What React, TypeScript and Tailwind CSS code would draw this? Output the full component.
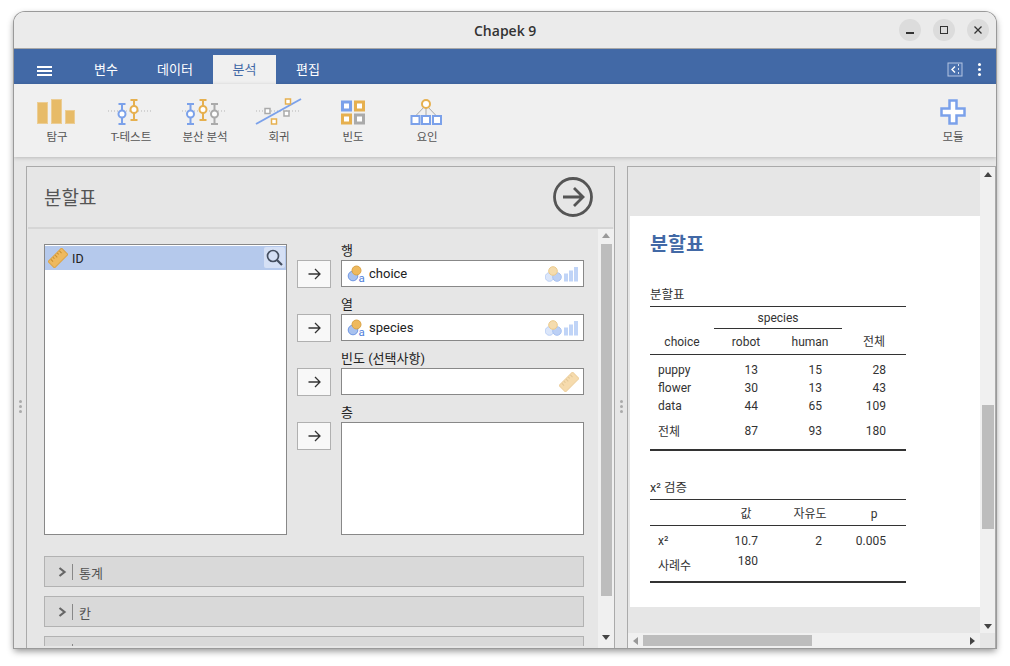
import type { ReactNode } from "react";

const FONT = "font-['Roboto','Noto_Sans_CJK_KR',sans-serif]";

const TABS = [
  { label: "변수", width: "w-[62px]" },
  { label: "데이터", width: "w-[76px]" },
  { label: "분석", width: "w-[63px]", active: true },
  { label: "편집", width: "w-[64px]" },
];

function Ruler({ faded = false }: { faded?: boolean }) {
  return (
    <svg width="20" height="20" viewBox="0 0 20 20" className={faded ? "opacity-50" : ""}>
      <g transform="rotate(-45 10 10)">
        <rect x="0.5" y="5.5" width="19" height="9" rx="0.5" fill="#eeb95e" stroke="#dfa544" />
        <path d="M4 6v3M7 6v2M10 6v3M13 6v2M16 6v3" stroke="#c98f30" strokeWidth="1" />
      </g>
    </svg>
  );
}

function Nominal() {
  return (
    <svg width="18" height="18" viewBox="0 0 18 18" className="shrink-0">
      <circle cx="6" cy="11" r="4.800" fill="#a9c2ef" stroke="#6f97e4" />
      <circle cx="9.500" cy="5.500" r="4.500" fill="#eeb95e" stroke="#d9a245" />
      <text x="11.500" y="16.5" fontSize="11.500" fill="#4f7fdb" fontFamily="Roboto">a</text>
    </svg>
  );
}

function AllowedTypes() {
  return (
    <svg width="34" height="18" viewBox="0 0 34 18">
      <circle cx="4.500" cy="12" r="4.300" fill="#dbe6fa" stroke="#bcd0f5" />
      <circle cx="12" cy="12" r="4.300" fill="#bcd0f5" stroke="#a8c2f2" />
      <circle cx="8" cy="6" r="4.300" fill="#f5dcae" stroke="#eccb8d" />
      <path d="M19 8.500h4v8h-4zM24 5.500h4v11h-4zM29 2h4v14.500h-4z" fill="#c0d4f7" />
    </svg>
  );
}

function ErrorBar({ x, top, bottom, cy, color }: { x: number; top: number; bottom: number; cy: number; color: string }) {
  return (
    <g stroke={color} strokeWidth="2" fill="none">
      <path d={`M${x - 3.500} ${top}h7M${x - 3.500} ${bottom}h7M${x} ${top}V${bottom}`} />
      <circle cx={x} cy={cy} r="3.500" fill="#fff" />
    </g>
  );
}

function ToolIcon({ kind }: { kind: string }) {
  const blue = "#7ba1ea";
  const orange = "#e6b04f";
  const grey = "#aaaaaa";
  const dotted = <path d="M1 13H46" stroke="#b5b5b5" strokeDasharray="1 2" />;
  return (
    <svg width="48" height="28" viewBox="0 0 48 28">
      {kind === "bars" && (
        <g fill="#e7bb68" stroke="#eccd94">
          <rect x="4.500" y="4.500" width="10" height="21" />
          <rect x="18.500" y="1.500" width="10" height="24" />
          <rect x="32.500" y="12.500" width="9" height="13" />
        </g>
      )}
      {kind === "ttest" && (
        <>
          {dotted}
          <ErrorBar x={15} top={6} bottom={26} cy={16} color={blue} />
          <ErrorBar x={27} top={2} bottom={22} cy={11.500} color={orange} />
        </>
      )}
      {kind === "anova" && (
        <>
          {dotted}
          <ErrorBar x={9.500} top={6} bottom={26} cy={16} color={blue} />
          <ErrorBar x={22} top={2} bottom={22} cy={11.500} color={orange} />
          <ErrorBar x={33.500} top={6} bottom={26} cy={16} color={grey} />
        </>
      )}
      {kind === "regression" && (
        <>
          {dotted}
          <path d="M1 26L46 1" stroke={blue} strokeWidth="2" />
          <g fill="#fff" strokeWidth="1.500">
            <rect x="10" y="10.500" width="5" height="5" stroke={grey} />
            <rect x="29" y="13" width="5" height="5" stroke={grey} />
            <rect x="30.500" y="1" width="5" height="5" stroke={orange} />
            <rect x="16.500" y="21" width="5" height="5" stroke={orange} />
          </g>
        </>
      )}
      {kind === "frequency" && (
        <g fill="#fff" strokeWidth="3">
          <rect x="13.500" y="4" width="8" height="8" stroke={blue} />
          <rect x="26.500" y="4" width="8" height="8" stroke={orange} />
          <rect x="13.500" y="17" width="8" height="8" stroke={orange} />
          <rect x="26.500" y="17" width="8" height="8" stroke={grey} />
        </g>
      )}
      {kind === "factor" && (
        <>
          <path d="M23 7L12.500 18M23 7V18M23 7L33.500 18" stroke="#a8a8a8" />
          <circle cx="23" cy="6" r="4" fill="#fff" stroke={orange} strokeWidth="2" />
          <g fill="#fff" stroke={blue} strokeWidth="2">
            <rect x="8.500" y="18" width="8" height="8" />
            <rect x="19" y="18" width="8" height="8" />
            <rect x="30" y="18" width="8" height="8" />
          </g>
        </>
      )}
      {kind === "plus" && (
        <path
          d="M20.500 2.500h7v8h8v7h-8v8h-7v-8h-8v-7h8z"
          fill="#fff"
          stroke={blue}
          strokeWidth="2.500"
        />
      )}
    </svg>
  );
}

function Tool({ kind, label, width = "w-[74px]" }: { kind: string; label: string; width?: string }) {
  return (
    <div className={`${width} flex flex-col items-center`}>
      <ToolIcon kind={kind} />
      <div className="mt-[2px] text-[11.500px] leading-[18px] text-[#555]">{label}</div>
    </div>
  );
}

function ArrowButton() {
  return (
    <button className="flex h-[28px] w-[34px] items-center justify-center border border-[#b0b0b0] bg-[#f8f8f8]">
      <svg width="13" height="12" viewBox="0 0 13 12" fill="none" stroke="#333" strokeWidth="1.300">
        <path d="M0.500 6H12M7 1l5 5-5 5" />
      </svg>
    </button>
  );
}

function TargetRow({ label, children }: { label: string; children: ReactNode }) {
  return (
    <div className="flex h-[54px] items-start gap-[10px]">
      <div className="mt-[17px]">
        <ArrowButton />
      </div>
      <div className="w-[243px]">
        <div className="h-[15px] text-[13px] leading-[15px] text-[#222]">{label}</div>
        {children}
      </div>
    </div>
  );
}

function VarBox({ name }: { name: string }) {
  return (
    <div className="mt-[2px] flex h-[27px] items-center border border-[#888] bg-white pl-[5px] pr-[4px]">
      <Nominal />
      <span className="ml-[4px] flex-1 text-[13px] text-[#222]">{name}</span>
      <AllowedTypes />
    </div>
  );
}

function Section({ label }: { label: string }) {
  return (
    <div className="mb-[9px] flex h-[31px] shrink-0 items-center border border-[#b2b2b2] bg-[#d9d9d9] pl-[13px]">
      <svg width="9" height="10" viewBox="0 0 9 10" fill="none" stroke="#666" strokeWidth="2.200">
        <path d="M1.500 1l5 4-5 4" />
      </svg>
      <div className="ml-[5px] h-[16px] w-px bg-[#888]" />
      <span className="ml-[6px] pt-[4px] text-[13px] text-[#555]">{label}</span>
    </div>
  );
}

function Triangle({ dir, color = "#444" }: { dir: "up" | "down" | "left" | "right"; color?: string }) {
  const points = {
    up: "0,6 4,1 8,6",
    down: "0,2 8,2 4,7",
    left: "6,0 6,8 1,4",
    right: "2,0 2,8 7,4",
  }[dir];
  return (
    <svg width="8" height="8" viewBox="0 0 8 8">
      <polygon points={points} fill={color} />
    </svg>
  );
}

function Splitter() {
  return (
    <div className="flex w-[12px] flex-col items-center justify-center gap-[2px] pb-[2px]">
      <span className="h-[3px] w-[3px] rounded-full bg-[#aaa]" />
      <span className="h-[3px] w-[3px] rounded-full bg-[#aaa]" />
      <span className="h-[3px] w-[3px] rounded-full bg-[#aaa]" />
    </div>
  );
}

const COLS = "grid grid-cols-[64px_64px_64px_64px]";

function Num({ children, lift = false }: { children?: ReactNode; lift?: boolean }) {
  return <div className={`pr-[20px] text-right ${lift ? "mb-[3px]" : ""}`}>{children}</div>;
}

function FreqRow({ cells, total = false }: { cells: string[]; total?: boolean }) {
  return (
    <div className={`${COLS} ${total ? "h-[34px]" : "h-[18px]"} items-center`}>
      <div className="pl-[8px]">{cells[0]}</div>
      <Num lift={total}>{cells[1]}</Num>
      <Num lift={total}>{cells[2]}</Num>
      <Num lift={total}>{cells[3]}</Num>
    </div>
  );
}

function Results() {
  return (
    <div className="w-[256px] text-[12px] leading-[18px] text-[#333]">
      <div className="pt-[15px] text-[19.500px] font-bold leading-[28px] text-[#4269a6]">분할표</div>
      <div className="mt-[27px] h-[20px] text-[12.500px]">분할표</div>
      <div className="border-t border-[#333]">
        <div className={`${COLS} h-[22px] items-center`}>
          <div />
          <div className="col-span-2 border-b border-[#333] pt-[1px] text-center leading-[20px]">species</div>
        </div>
        <div className={`${COLS} h-[25px] items-center text-center`}>
          <div>choice</div>
          <div>robot</div>
          <div>human</div>
          <div>전체</div>
        </div>
      </div>
      <div className="border-t border-[#333] pt-[6px]">
        <FreqRow cells={["puppy", "13", "15", "28"]} />
        <FreqRow cells={["flower", "30", "13", "43"]} />
        <FreqRow cells={["data", "44", "65", "109"]} />
        <FreqRow cells={["전체", "87", "93", "180"]} total />
      </div>
      <div className="h-[2px] bg-[#333]" />
      <div className="mt-[28px] h-[20px] text-[12.500px]">x² 검증</div>
      <div className="border-t border-[#333]">
        <div className={`${COLS} h-[25px] items-center pt-[2px] text-center`}>
          <div />
          <div>값</div>
          <div>자유도</div>
          <div>p</div>
        </div>
      </div>
      <div className="border-t border-[#333] pt-[5px]">
        <div className={`${COLS} h-[20px] items-center`}>
          <div className="pl-[8px]">x²</div>
          <Num>10.7</Num>
          <Num>2</Num>
          <Num>0.005</Num>
        </div>
        <div className={`${COLS} h-[30px] pt-[1px]`}>
          <div className="pl-[8px] pt-[5px]">사례수</div>
          <Num>180</Num>
        </div>
      </div>
      <div className="h-[2px] bg-[#333]" />
    </div>
  );
}

export default function App() {
  return (
    <div className={`h-[666px] w-[1010px] overflow-hidden bg-white pl-[14px] pt-[12px] ${FONT}`}>
      <div className="flex h-[636px] w-[982px] flex-col overflow-hidden rounded-t-[11px] shadow-[0_0_0_1px_#9a9a9a,0_3px_7px_rgba(0,0,0,0.45)]">
        {/* title bar */}
        <div className="flex h-[37px] shrink-0 items-center border-b border-[#a8a8a8] bg-[#ebebeb] pl-[460px] pr-[7px]">
          <div className="w-[62px] whitespace-nowrap text-center font-['Open_Sans',sans-serif] text-[14px] font-semibold text-[#333]">
            Chapek 9
          </div>
          <div className="ml-auto flex gap-[12px]">
            <div className="flex h-[22px] w-[22px] items-center justify-center rounded-full bg-[#dcdcdc]">
              <div className="mt-[6px] h-[1.500px] w-[8px] bg-[#333]" />
            </div>
            <div className="flex h-[22px] w-[22px] items-center justify-center rounded-full bg-[#dcdcdc]">
              <div className="h-[8px] w-[8px] border border-[#333]" />
            </div>
            <div className="flex h-[22px] w-[22px] items-center justify-center rounded-full bg-[#dcdcdc]">
              <svg width="10" height="10" viewBox="0 0 10 10" stroke="#333" strokeWidth="1.300">
                <path d="M1.500 1.500l7 7M8.500 1.500l-7 7" />
              </svg>
            </div>
          </div>
        </div>

        {/* tab bar */}
        <div className="flex h-[35px] shrink-0 items-end bg-[#4269a6] text-[13px]">
          <div className="flex h-[35px] w-[62px] items-center justify-center">
            <div className="mr-[1px] mt-[9px] flex w-[15px] flex-col gap-[2px]">
              <span className="h-[2px] bg-white" />
              <span className="h-[2px] bg-white" />
              <span className="h-[2px] bg-white" />
            </div>
          </div>
          <div className="ml-[-1px] flex">
            {TABS.map((tab) => (
              <div
                key={tab.label}
                className={`flex h-[29px] items-center justify-center ${tab.width} ${
                  tab.active ? "bg-[#f0f0f0] text-[#4269a6]" : "text-white"
                }`}
              >
                {tab.label}
              </div>
            ))}
          </div>
          <div className="ml-auto flex h-[35px] items-center pr-[15px]">
            <svg width="16" height="15" viewBox="0 0 16 15" fill="none" className="mt-[5px]">
              <rect x="1" y="1" width="14" height="13" fill="#4a71ae" stroke="#b4c5e2" />
              <path d="M8 4.500L5 7.500l3 3" stroke="#fff" strokeWidth="1.400" />
              <path d="M11.500 2v11" stroke="#d5dfef" strokeDasharray="2 2" />
            </svg>
            <div className="ml-[15px] mt-[6px] flex flex-col gap-[2px]">
              <span className="h-[3px] w-[3px] rounded-full bg-white" />
              <span className="h-[3px] w-[3px] rounded-full bg-white" />
              <span className="h-[3px] w-[3px] rounded-full bg-white" />
            </div>
          </div>
        </div>

        {/* tool bar */}
        <div className="z-10 flex h-[73px] shrink-0 items-start bg-[#f0f0f0] pl-[6px] pr-[6px] pt-[14px] shadow-[0_1px_4px_rgba(0,0,0,0.2)]">
          <Tool kind="bars" label="탐구" />
          <Tool kind="ttest" label="T-테스트" />
          <Tool kind="anova" label="분산 분석" />
          <Tool kind="regression" label="회귀" />
          <Tool kind="frequency" label="빈도" />
          <Tool kind="factor" label="요인" />
          <div className="ml-auto">
            <Tool kind="plus" label="모듈" />
          </div>
        </div>

        {/* body */}
        <div className="flex min-h-0 flex-1 bg-[#e6e6e6] pt-[9px]">
          <Splitter />

          {/* options panel */}
          <div className="flex w-[589px] flex-col border-x border-t border-[#aaa] bg-[#e6e6e6]">
            <div className="mx-[1px] flex h-[62px] shrink-0 items-center justify-between border-b-2 border-[#d6d6d6] pl-[16px] pr-[19px]">
              <div className="pt-[4px] text-[19px] text-[#555]">분할표</div>
              <svg width="42" height="42" viewBox="0 0 42 42" fill="none" stroke="#555" strokeWidth="2.800" className="mt-[-1px]">
                <circle cx="21" cy="21" r="18.500" />
                <path d="M11 21H31M22 12l9 9-9 9" />
              </svg>
            </div>
            <div className="flex min-h-0 flex-1">
              <div className="min-h-0 flex-1 overflow-hidden pl-[17px] pr-[14px] pt-[15px]">
                <div className="h-[402px] overflow-hidden">
                  <div className="flex gap-[10px]">
                    <div className="relative h-[291px] w-[243px] border border-[#888] bg-white pt-[1px]">
                      <div className="flex h-[24px] items-center bg-[#b5c9ec] pl-[3px]">
                        <Ruler />
                        <span className="ml-[4px] pt-[2px] text-[12.500px] text-[#222]">ID</span>
                      </div>
                      <div className="absolute left-[219px] top-[2px] flex h-[21px] w-[21px] items-center justify-center rounded-[2px] bg-[#d5e0f5]">
                        <svg width="17" height="17" viewBox="0 0 17 17" fill="none" stroke="#454f60" strokeWidth="1.700">
                          <circle cx="7" cy="7" r="5.500" />
                          <path d="M11 11l5 5" strokeWidth="2.200" />
                        </svg>
                      </div>
                    </div>
                    <div className="mt-[-1px] flex flex-col">
                      <TargetRow label="행">
                        <VarBox name="choice" />
                      </TargetRow>
                      <TargetRow label="열">
                        <VarBox name="species" />
                      </TargetRow>
                      <TargetRow label="빈도 (선택사항)">
                        <div className="mt-[2px] flex h-[27px] items-center justify-end border border-[#888] bg-white pr-[4px]">
                          <Ruler faded />
                        </div>
                      </TargetRow>
                      <div className="flex items-start gap-[10px]">
                        <div className="mt-[17px]">
                          <ArrowButton />
                        </div>
                        <div>
                          <div className="h-[15px] w-[243px] text-[13px] leading-[15px] text-[#222]">층</div>
                          <div className="mt-[2px] h-[113px] w-[243px] border border-[#888] bg-white" />
                        </div>
                      </div>
                    </div>
                  </div>
                  <div className="mt-[21px] flex flex-col">
                    <Section label="통계" />
                    <Section label="칸" />
                    <Section label="" />
                  </div>
                </div>
              </div>
              <div className="flex w-[16px] flex-col items-center bg-[#f0f0f0] pb-[7px] pt-[3px]">
                <Triangle dir="up" color="#999" />
                <div className="mt-[4px] h-[352px] w-[11px] bg-[#bdbdbd]" />
                <div className="mt-auto">
                  <Triangle dir="down" />
                </div>
              </div>
            </div>
          </div>

          <Splitter />

          {/* results panel */}
          <div className="flex min-w-0 flex-1 flex-col border-l border-r border-t border-[#aaa]">
            <div className="flex min-h-0 flex-1">
              <div className="flex min-w-0 flex-1 flex-col">
                <div className="h-[49px] shrink-0 bg-[#e6e6e6]" />
                <div className="ml-[2px] h-[391px] shrink-0 bg-white pl-[20px]">
                  <Results />
                </div>
                <div className="flex-1 bg-[#e6e6e6]" />
              </div>
              <div className="flex w-[15px] shrink-0 flex-col items-center bg-[#f0f0f0] pb-[3px] pt-[4px]">
                <Triangle dir="up" />
                <div className="mt-[226px] h-[124px] w-[12px] bg-[#bdbdbd]" />
                <div className="mt-auto">
                  <Triangle dir="down" />
                </div>
              </div>
            </div>
            <div className="flex h-[15px] shrink-0 bg-[#f0f0f0]">
              <div className="flex flex-1 items-center pl-[4px] pr-[4px]">
                <Triangle dir="left" color="#999" />
                <div className="ml-[3px] h-[11px] w-[169px] bg-[#bdbdbd]" />
                <div className="ml-auto">
                  <Triangle dir="right" />
                </div>
              </div>
              <div className="w-[15px] bg-[#e6e6e6]" />
            </div>
          </div>
        </div>
      </div>
    </div>
  );
}
